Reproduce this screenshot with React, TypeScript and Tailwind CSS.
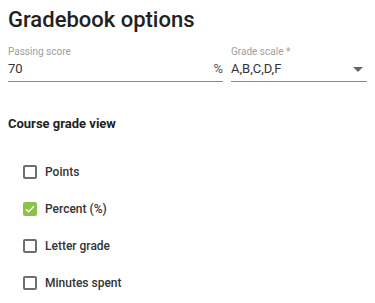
const font = { fontFamily: "Roboto, 'Liberation Sans', sans-serif" };

function Check({ label, checked }: { label: string; checked?: boolean }) {
  return (
    <label className="flex items-center gap-[8px] h-[37px]">
      {checked ? (
        <span className="flex h-[14px] w-[14px] items-center justify-center rounded-[2px] bg-[#8bc34a]">
          <svg viewBox="0 0 24 24" className="h-[12px] w-[12px]" fill="none" stroke="#fff" strokeWidth="3">
            <path d="M4 12.5l5 5L20 6.5" />
          </svg>
        </span>
      ) : (
        <span className="h-[14px] w-[14px] rounded-[2px] border-2 border-[#6f6f6f]" />
      )}
      <span className="text-[12px] font-medium text-[#333]">{label}</span>
    </label>
  );
}

export default function App() {
  return (
    <div className="w-[375px] h-[303px] bg-white px-2 pt-[7px]" style={font}>
      <h1 className="text-[22px] leading-[26px] font-medium text-[#212121]">Gradebook options</h1>

      <div className="mt-[12px] flex gap-2">
        <div className="w-[215px]">
          <div className="text-[10px] leading-[13px] text-[#9e9e9e]">Passing score</div>
          <div className="mt-[3px] flex items-end justify-between border-b border-[#888] pb-[4px]">
            <span className="text-[13px] leading-[16px] text-[#333]">70</span>
            <span className="text-[13px] leading-[16px] text-[#555]">%</span>
          </div>
        </div>
        <div className="flex-1">
          <div className="text-[10px] leading-[13px] text-[#9e9e9e]">Grade scale *</div>
          <div className="mt-[3px] flex items-center justify-between border-b border-[#888] pb-[4px]">
            <span className="text-[13px] leading-[16px] text-[#333]">A,B,C,D,F</span>
            <span className="mr-[4px] h-0 w-0 border-x-[5px] border-t-[5px] border-x-transparent border-t-[#666]" />
          </div>
        </div>
      </div>

      <h2 className="mt-[34px] text-[13px] leading-[16px] font-bold text-[#222]">Course grade view</h2>

      <div className="mt-[21px] pl-[15px]">
        <Check label="Points" />
        <Check label="Percent (%)" checked />
        <Check label="Letter grade" />
        <Check label="Minutes spent" />
      </div>
    </div>
  );
}
